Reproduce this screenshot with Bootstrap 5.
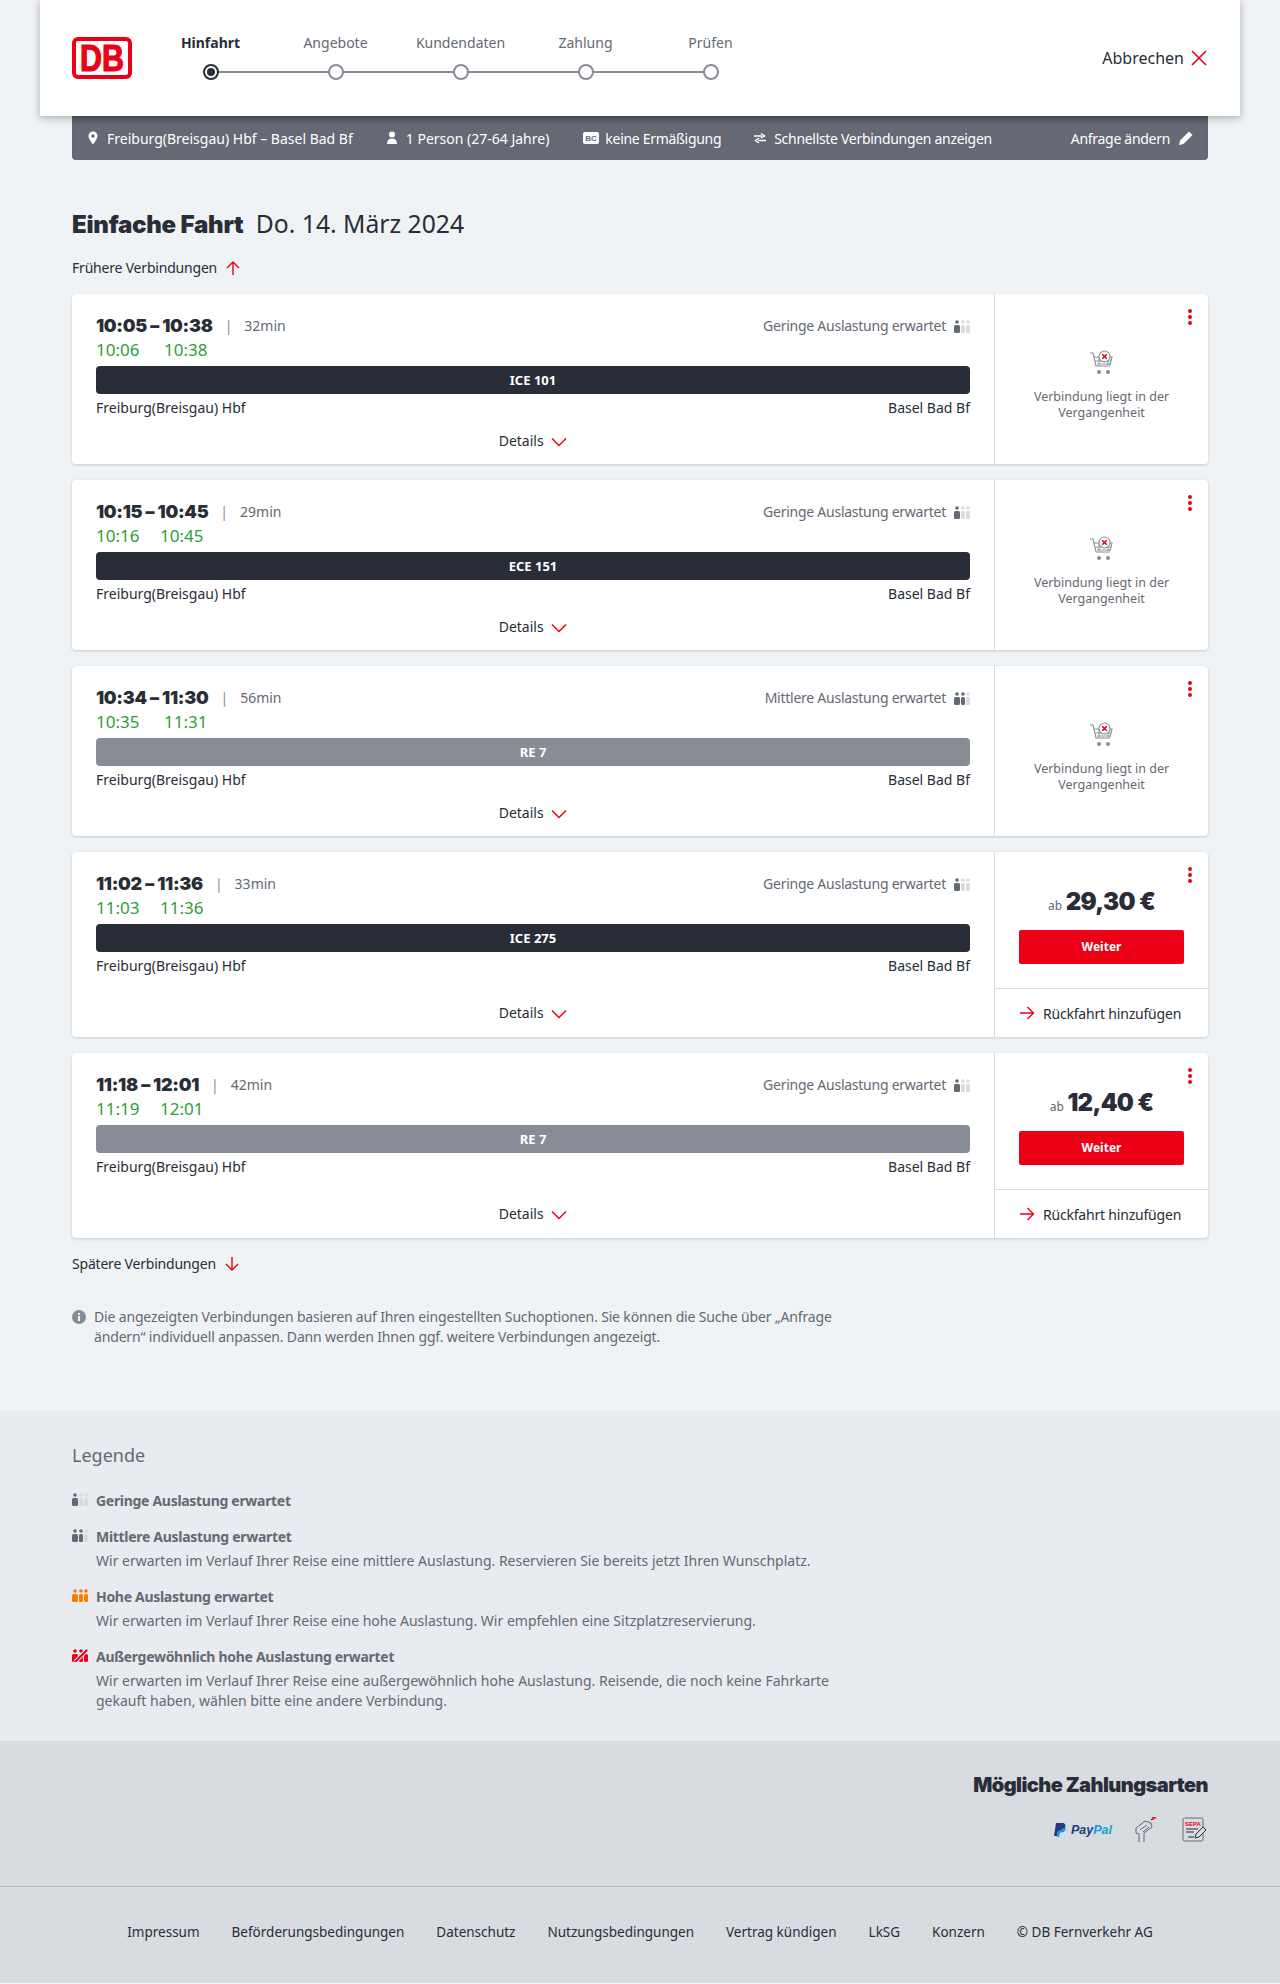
<!DOCTYPE html>
<html lang="de">
<head>
<meta charset="UTF-8" />
<title>Verbindungen</title>
<link href="https://cdn.jsdelivr.net/npm/bootstrap@5.3.0/dist/css/bootstrap.min.css" rel="stylesheet" />
<style>
  body { background: #eff3f6; font-family: "Noto Sans", "Liberation Sans", sans-serif; font-size: 14px; color: #282d37; }
  .wrap-w { width: 1136px; margin: 0 auto; }
  .top-head { width: 1200px; height: 116px; margin: 0 auto; background: #fff; padding: 0 32px; box-shadow: 0 2px 8px rgba(40,45,55,.35); position: relative; z-index: 2; }
  .db-logo { width: 60px; height: 42px; flex: none; }
  .stepper { width: 625px; margin-left: 16px; margin-top: 2px; flex: none; }
  .step-i { width: 125px; flex: none; text-align: center; font-size: 14px; color: #646973; position: relative; height: 52px; }
  .step-i.now { color: #282d37; font-weight: 700; }
  .step-lb { display: block; line-height: 20px; white-space: nowrap; }
  .step-dot { position: absolute; left: 50%; margin-left: -8px; top: 31px; width: 16px; height: 16px; border: 2px solid #878c96; border-radius: 50%; background: #fff; z-index: 1; }
  .step-i.now .step-dot { border-color: #282d37; }
  .step-i.now .step-dot::after { content: ""; position: absolute; left: 2px; top: 2px; width: 8px; height: 8px; background: #282d37; border-radius: 50%; }
  .step-i:not(:last-child)::after { content: ""; position: absolute; left: 50%; width: 100%; top: 38px; height: 2px; background: #878c96; }
  .abort-lnk { font-size: 16px; color: #282d37; gap: 6px; }
  .sub-bar { height: 44px; background: #646973; color: #fff; border-radius: 0 0 4px 4px; padding: 0 14px 0 13px; font-size: 14px; box-shadow: inset 0 6px 6px -4px rgba(40,45,55,.45); }
  .sub-bar svg { flex: none; }
  .sb-txt { margin-left: 6px; }
  .sb-tight { letter-spacing: -.3px; }
  .sb-grp { margin-left: 31px; }
  .sb-grp2 { margin-left: 34px; }
  .page-ttl { margin: 44px 0 0; font-size: 24.7px; line-height: 40px; font-weight: 400; }
  .page-ttl b { font-family: Inter, "Noto Sans", sans-serif; font-weight: 900; margin-right: 6px; letter-spacing: -.25px; font-size: 24px; }
  .more-lnk { height: 20px; line-height: 20px; letter-spacing: -.2px; }
  .more-top { margin: 13px 0 16px; }
  .more-bot { margin-top: 4px; }
  .conn-card { background: #fff; border-radius: 4px; box-shadow: 0 1px 3px rgba(40,45,55,.2); margin-bottom: 16px; overflow: hidden; }
  .conn-main { width: 923px; flex: none; padding: 19px 24px 0; border-right: 1px solid #d7dce1; position: relative; }
  .conn-side { width: 213px; flex: none; position: relative; }
  .time-ln { height: 26px; line-height: 26px; }
  .time-big { font-family: Inter, "Noto Sans", sans-serif; font-size: 18px; font-weight: 900; letter-spacing: -.3px; }
  .time-sep { color: #878c96; margin: 0 12px; }
  .time-dur { color: #646973; }
  .load-txt { color: #646973; letter-spacing: -.25px; }
  .real-ln { color: #2f9e35; font-size: 17px; line-height: 22px; height: 22px; display: flex; }
  .train-pill { height: 28px; line-height: 28px; border-radius: 4px; text-align: center; color: #fff; font-size: 13px; font-weight: 700; margin-top: 5px; }
  .train-fast { background: #282d37; }
  .train-reg { background: #878c96; }
  .stat-ln { line-height: 20px; margin-top: 4px; }
  .det-ln { text-align: center; margin-top: 13px; padding-bottom: 13px; line-height: 20px; }
  .conn-high .det-ln { margin-top: 27px; padding-bottom: 14px; }
  .dots-btn { position: absolute; right: 16px; top: 15px; width: 4px; display: flex; flex-direction: column; gap: 2px; }
  .dots-btn i { display: block; width: 4px; height: 4px; background: #ec0016; border-radius: 50%; }
  .past-box { height: 100%; text-align: center; color: #646973; font-size: 12.5px; line-height: 16px; padding-top: 56px; }
  .past-txt { margin-top: 13px; padding: 0 24px; }
  .price-box { height: 137px; text-align: center; padding: 34px 24px 0; border-bottom: 1px solid #d7dce1; }
  .price-ab { font-size: 12px; color: #646973; }
  .price-val { font-family: Inter, "Noto Sans", sans-serif; font-weight: 900; font-size: 24px; line-height: 32px; letter-spacing: -.7px; }
  .next-btn { width: 100%; height: 34px; background: #ec0016; border: 0; color: #fff; font-size: 12px; font-weight: 700; border-radius: 2px; margin-top: 12px; display: block; }
  .back-lnk { height: 48px; padding-left: 24px; letter-spacing: -.2px; }
  .info-nt { width: 770px; color: #646973; line-height: 20px; margin-top: 33px; letter-spacing: -.16px; }
  .info-ic { flex: none; margin-top: 3px; }
  .legend-sec { background: #e8ebf0; height: 330px; margin-top: 64px; padding-top: 32px; color: #646973; }
  .legend-ttl { font-size: 18px; line-height: 24px; margin-bottom: 24px; }
  .legend-it { margin-bottom: 16px; line-height: 20px; width: 780px; }
  .legend-it b { font-weight: 700; letter-spacing: -.3px; }
  .legend-it p { margin: 4px 0 0; }
  .legend-ic { padding-top: 2px; line-height: 0; }
  .pay-sec { background: #d7dce1; height: 146px; border-bottom: 1px solid #b4b9c1; padding-top: 30px; }
  .pay-ttl { font-family: Inter, "Noto Sans", sans-serif; font-weight: 900; font-size: 20px; line-height: 28px; letter-spacing: -.55px; }
  .pay-row { margin-top: 18px; }
  .pay-hand { margin-left: 22px; }
  .foot-sec { background: #d7dce1; height: 96px; color: #282d37; gap: 32px; font-size: 13.5px; padding-bottom: 6px; }
  .pp-txt { font-family: "Liberation Sans", sans-serif; font-style: italic; font-weight: 700; font-size: 12.5px; color: #253b80; }
  .pp-txt span { color: #179bd7; }
</style>
</head>
<body>
<svg width="0" height="0" class="position-absolute">
  <defs>
    <symbol id="ic-x" viewBox="0 0 18 18"><path d="M2 2l14 14M16 2L2 16" fill="none" stroke="#ec0016" stroke-width="1.6"/></symbol>
    <symbol id="ic-down" viewBox="0 0 16 10"><path d="M1 1.500l7 7 7-7" fill="none" stroke="#ec0016" stroke-width="1.5"/></symbol>
    <symbol id="ic-arrow" viewBox="0 0 16 16"><path d="M1 8h13M8.500 2l6 6-6 6" fill="none" stroke="#ec0016" stroke-width="1.4"/></symbol>
    <symbol id="ic-up" viewBox="0 0 16 16"><path d="M8 15V2M2 8l6-6 6 6" fill="none" stroke="#ec0016" stroke-width="1.4"/></symbol>
    <symbol id="ic-dn" viewBox="0 0 16 16"><path d="M8 1v13M2 8l6 6 6-6" fill="none" stroke="#ec0016" stroke-width="1.4"/></symbol>
    <symbol id="ic-cart" viewBox="0 0 26 26">
      <path d="M1 3h3l3 13h14M5 7h18l-2 8" fill="none" stroke="#878c96" stroke-width="1.100"/>
      <path d="M6 11h16M8 14h13M10 8v7M19 8v7" stroke="#878c96" fill="none" stroke-width=".9"/>
      <circle cx="15.500" cy="6.500" r="5.500" fill="#fff" stroke="#878c96" stroke-width="1.100"/>
      <path d="M13.200 4.200l4.600 4.600M17.800 4.200l-4.600 4.600" stroke="#ec0016" stroke-width="1.600"/>
      <circle cx="10" cy="22" r="2" fill="#878c96"/><circle cx="19" cy="22" r="2" fill="#878c96"/>
    </symbol>
  </defs>
</svg>

<header class="top-head d-flex align-items-center">
  <svg class="db-logo" viewBox="0 0 60 42" role="img" aria-label="DB">
    <rect x="2" y="2" width="56" height="38" rx="4" fill="#fff" stroke="#ec0016" stroke-width="4"/>
    <text x="30" y="34" text-anchor="middle" font-family="Liberation Sans" font-weight="700" font-size="36" textLength="44" lengthAdjust="spacingAndGlyphs" fill="#ec0016" stroke="#ec0016" stroke-width="1.200">DB</text>
  </svg>
  <div class="stepper d-flex">
    <div class="step-i now"><span class="step-lb">Hinfahrt</span><span class="step-dot"></span></div>
    <div class="step-i"><span class="step-lb">Angebote</span><span class="step-dot"></span></div>
    <div class="step-i"><span class="step-lb">Kundendaten</span><span class="step-dot"></span></div>
    <div class="step-i"><span class="step-lb">Zahlung</span><span class="step-dot"></span></div>
    <div class="step-i"><span class="step-lb">Prüfen</span><span class="step-dot"></span></div>
  </div>
  <div class="ms-auto d-flex align-items-center abort-lnk">Abbrechen <svg width="18" height="18"><use href="#ic-x"/></svg></div>
</header>

<div class="wrap-w">
  <div class="sub-bar d-flex align-items-center">
    <svg width="16" height="16" viewBox="0 0 16 16"><path d="M8 1.500a4.500 4.500 0 0 0-4.500 4.500c0 3 4.500 8.500 4.500 8.500s4.500-5.500 4.500-8.500A4.500 4.500 0 0 0 8 1.500zm0 6.200a1.700 1.700 0 1 1 0-3.400 1.700 1.700 0 0 1 0 3.400z" fill="#fff"/></svg>
    <span class="sb-txt">Freiburg(Breisgau) Hbf – Basel Bad Bf</span>
    <svg class="sb-grp" width="16" height="16" viewBox="0 0 16 16"><circle cx="8" cy="4.500" r="3" fill="#fff"/><path d="M3 14c0-3.500 2-5.500 5-5.500s5 2 5 5.500z" fill="#fff"/></svg>
    <span class="sb-txt">1 Person (27-64 Jahre)</span>
    <svg class="sb-grp2" width="16" height="14" viewBox="0 0 16 14"><rect width="16" height="12" y="1" rx="2" fill="#fff"/><text x="8" y="10" text-anchor="middle" font-size="8" font-weight="700" font-family="Liberation Sans" fill="#646973">BC</text></svg>
    <span class="sb-txt sb-tight">keine Ermäßigung</span>
    <svg class="sb-grp" width="16" height="16" viewBox="0 0 16 16"><path d="M2 6h8M9 3.500 12.500 6 9 8M14 10.500H6M7 8 3.500 10.500 7 13" fill="none" stroke="#fff" stroke-width="1.400"/></svg>
    <span class="sb-txt sb-tight">Schnellste Verbindungen anzeigen</span>
    <span class="ms-auto sb-tight">Anfrage ändern</span>
    <svg class="ms-2" width="16" height="16" viewBox="0 0 16 16"><path d="M1 15l1-4.500L11 1.500l3.500 3.500-9 9z" fill="#fff"/></svg>
  </div>

  <h1 class="page-ttl"><b>Einfache Fahrt</b> Do. 14. März 2024</h1>
  <div class="more-lnk more-top d-flex align-items-center gap-2">Frühere Verbindungen <svg width="16" height="16"><use href="#ic-up"/></svg></div>

  <div id="conn-list"></div>

  <div class="more-lnk more-bot d-flex align-items-center gap-2">Spätere Verbindungen <svg width="16" height="16"><use href="#ic-dn"/></svg></div>
  <div class="info-nt d-flex gap-2">
    <svg class="info-ic" width="14" height="14" viewBox="0 0 14 14"><circle cx="7" cy="7" r="7" fill="#878c96"/><rect x="6" y="6" width="2" height="5" fill="#eff3f6"/><rect x="6" y="3" width="2" height="2" fill="#eff3f6"/></svg>
    <div>Die angezeigten Verbindungen basieren auf Ihren eingestellten Suchoptionen. Sie können die Suche über „Anfrage ändern“ individuell anpassen. Dann werden Ihnen ggf. weitere Verbindungen angezeigt.</div>
  </div>
</div>

<section class="legend-sec">
  <div class="wrap-w">
    <div class="legend-ttl">Legende</div>
    <div id="legend-list"></div>
  </div>
</section>

<section class="pay-sec">
  <div class="wrap-w text-end">
    <div class="pay-ttl">Mögliche Zahlungsarten</div>
    <div class="pay-row d-flex justify-content-end align-items-center">
      <svg width="14" height="16" viewBox="0 0 14 16"><path d="M3 1h6c3 0 4 2 3 4.500S8.500 9 6.500 9H5l-1 5H1z" fill="#253b80"/><path d="M12.500 5c.8 2.500-1 5.500-4 5.500H7l-1 4.500H3.800L5 9.500" fill="#179bd7"/></svg>
      <span class="pp-txt ms-1">Pay<span>Pal</span></span>
      <svg class="pay-hand" width="24" height="26" viewBox="0 0 24 26"><path d="M5 25v-8l-3-1V11l9-7 6 2 1 4-8 6v9M6 13l7-5M9 15l6-5" fill="none" stroke="#646973" stroke-width="1"/><path d="M17 3c1-1 2-1 3-.5M18 1c1.500-.7 3-.5 4 .5" fill="none" stroke="#ec0016" stroke-width="1.200"/></svg>
      <svg class="ms-4" width="26" height="26" viewBox="0 0 26 26"><rect x="1" y="1" width="20" height="23" rx="1.500" fill="none" stroke="#646973"/><text x="11" y="9" text-anchor="middle" font-size="6" font-weight="700" font-family="Liberation Sans" fill="#ec0016">SEPA</text><path d="M4 12h12M4 15h8M6 20h6" stroke="#282d37"/><path d="M13 21l1-4 7-7 3 3-7 7z" fill="#d7dce1" stroke="#282d37"/></svg>
    </div>
  </div>
</section>
<footer class="foot-sec d-flex justify-content-center align-items-center">
  <span>Impressum</span><span>Beförderungsbedingungen</span><span>Datenschutz</span><span>Nutzungsbedingungen</span><span>Vertrag kündigen</span><span>LkSG</span><span>Konzern</span><span>© DB Fernverkehr AG</span>
</footer>

<script>
  // load icon: three small figures, n of them dark
  function loadIcon(level) {
    const cols = { 1: ["#646973", "#d7dce1", "#d7dce1"], 2: ["#646973", "#646973", "#d7dce1"], 3: ["#ff7a00", "#ff7a00", "#ff7a00"] }[level] || ["#ec0016", "#ec0016", "#ec0016"];
    let parts = "";
    [[0, 6], [7, 4], [12, 4]].forEach(([x, w], i) => {
      parts += `<circle cx="${x + w / 2}" cy="2" r="1.800" fill="${cols[i]}"/><rect x="${x}" y="5" width="${w}" height="8" rx="1.500" fill="${cols[i]}"/>`;
    });
    if (level === 4) parts += `<path d="M3 13 15 1" stroke="#e8ebf0" stroke-width="4"/><path d="M3 13 15 1" stroke="#ec0016" stroke-width="2"/>`;
    return `<svg width="16" height="13" viewBox="0 0 16 13">${parts}</svg>`;
  }

  const conns = [
    { t: "10:05 – 10:38", d: "32min", a: "10:06", b: "10:38", off: 68, load: 1, tr: "ICE 101", fast: true },
    { t: "10:15 – 10:45", d: "29min", a: "10:16", b: "10:45", off: 64, load: 1, tr: "ECE 151", fast: true },
    { t: "10:34 – 11:30", d: "56min", a: "10:35", b: "11:31", off: 68, load: 2, tr: "RE 7", fast: false },
    { t: "11:02 – 11:36", d: "33min", a: "11:03", b: "11:36", off: 64, load: 1, tr: "ICE 275", fast: true, price: "29,30 €" },
    { t: "11:18 – 12:01", d: "42min", a: "11:19", b: "12:01", off: 64, load: 1, tr: "RE 7", fast: false, price: "12,40 €" },
  ];
  const loadTxt = { 1: "Geringe Auslastung erwartet", 2: "Mittlere Auslastung erwartet" };

  document.querySelector("#conn-list").innerHTML = conns.map((c) => {
    const side = c.price
      ? `<div class="price-box"><div><span class="price-ab">ab</span> <span class="price-val">${c.price}</span></div><button class="next-btn">Weiter</button></div>
         <div class="back-lnk d-flex align-items-center gap-2"><svg width="16" height="16"><use href="#ic-arrow"/></svg>Rückfahrt hinzufügen</div>`
      : `<div class="past-box"><svg width="26" height="26"><use href="#ic-cart"/></svg><div class="past-txt">Verbindung liegt in der Vergangenheit</div></div>`;
    return `<div class="conn-card d-flex ${c.price ? "conn-high" : ""}">
      <div class="conn-main">
        <div class="time-ln d-flex align-items-center">
          <span class="time-big">${c.t}</span><span class="time-sep">|</span><span class="time-dur">${c.d}</span>
          <span class="load-txt ms-auto me-2">${loadTxt[c.load]}</span>${loadIcon(c.load)}
        </div>
        <div class="real-ln"><span style="width:${c.off}px">${c.a}</span><span>${c.b}</span></div>
        <div class="train-pill ${c.fast ? "train-fast" : "train-reg"}">${c.tr}</div>
        <div class="stat-ln d-flex justify-content-between"><span>Freiburg(Breisgau) Hbf</span><span>Basel Bad Bf</span></div>
        <div class="det-ln">Details <svg class="ms-1" width="16" height="10"><use href="#ic-down"/></svg></div>
      </div>
      <div class="conn-side">
        <div class="dots-btn"><i></i><i></i><i></i></div>
        ${side}
      </div>
    </div>`;
  }).join("");

  const legend = [
    { l: 1, h: "Geringe Auslastung erwartet" },
    { l: 2, h: "Mittlere Auslastung erwartet", p: "Wir erwarten im Verlauf Ihrer Reise eine mittlere Auslastung. Reservieren Sie bereits jetzt Ihren Wunschplatz." },
    { l: 3, h: "Hohe Auslastung erwartet", p: "Wir erwarten im Verlauf Ihrer Reise eine hohe Auslastung. Wir empfehlen eine Sitzplatzreservierung." },
    { l: 4, h: "Außergewöhnlich hohe Auslastung erwartet", p: "Wir erwarten im Verlauf Ihrer Reise eine außergewöhnlich hohe Auslastung. Reisende, die noch keine Fahrkarte gekauft haben, wählen bitte eine andere Verbindung." },
  ];
  document.querySelector("#legend-list").innerHTML = legend.map((g) => `
    <div class="legend-it d-flex gap-2">
      <div class="legend-ic">${loadIcon(g.l)}</div>
      <div><b>${g.h}</b>${g.p ? `<p>${g.p}</p>` : ""}</div>
    </div>`).join("");
</script>
<script src="https://cdn.jsdelivr.net/npm/bootstrap@5.3.0/dist/js/bootstrap.bundle.min.js"></script>
</body>
</html>
